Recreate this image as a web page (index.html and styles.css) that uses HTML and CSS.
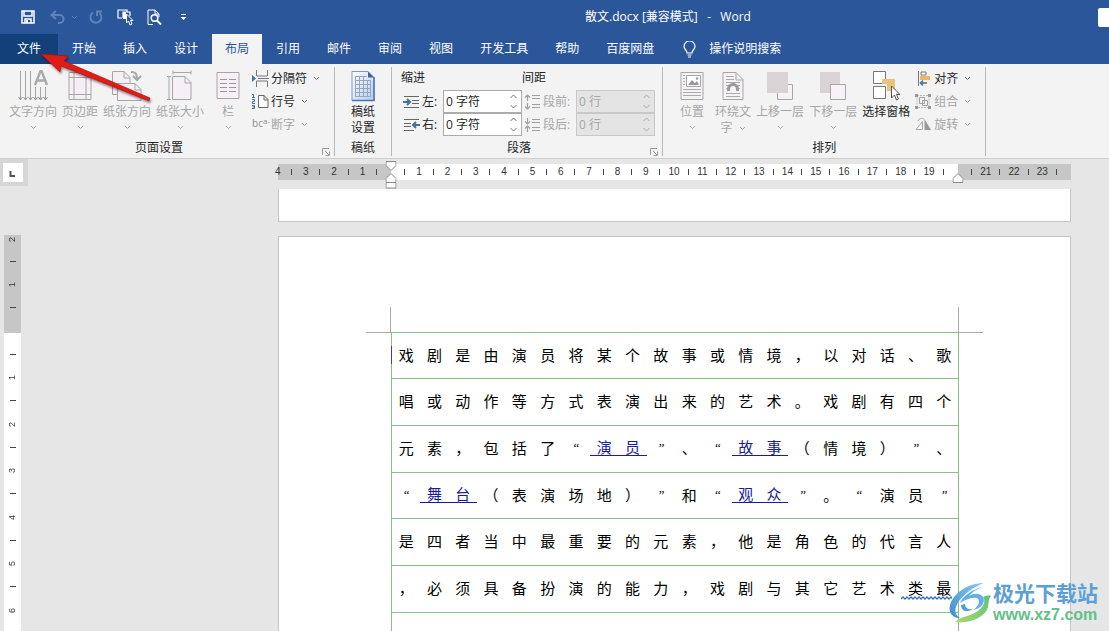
FILE: index.html
```html
<!DOCTYPE html>
<html lang="zh-CN">
<head>
<meta charset="utf-8">
<title>散文.docx - Word</title>
<link rel="stylesheet" href="styles.css">
</head>
<body>
<svg class="defs" aria-hidden="true">
  <symbol id="chev" viewBox="0 0 7 5"><path d="M1 1l2.500 2.500L6 1" fill="none" stroke="currentColor"/></symbol>
  <symbol id="up" viewBox="0 0 7 5"><path d="M.5 4l3-3 3 3" fill="none" stroke="currentColor"/></symbol>
  <symbol id="down" viewBox="0 0 7 5"><path d="M.5 1l3 3 3-3" fill="none" stroke="currentColor"/></symbol>
  <symbol id="launch" viewBox="0 0 8 8"><path d="M.5 7V.5H7M3 3l4 4M7.500 3.500v4h-4" fill="none" stroke="currentColor"/></symbol>
</svg>

<header class="titlebar">
  <div class="tools">
    <button class="tool tool-save" aria-label="保存"><svg width="14" height="14" viewBox="0 0 14 14"><path d="M1 1h12v12H1zM3 1v5h8V1M4 13V9h6v4" fill="none" stroke="#fff" stroke-width="1.500"/><path d="M5 10h2v3H5z" fill="#fff"/></svg></button>
    <button class="tool tool-off tool-undo" aria-label="撤消"><svg width="15" height="14" viewBox="0 0 15 14"><path d="M6 1L1.500 5 6 9M2 5h7.500a4 4 0 0 1 0 8H8" fill="none" stroke="currentColor" stroke-width="2"/></svg><svg width="7" height="5"><use href="#chev"/></svg></button>
    <button class="tool tool-off" aria-label="恢复"><svg width="15" height="14" viewBox="0 0 15 14"><path d="M4 2.500A5.500 5.500 0 1 0 10.500 3M8 6V1.500h5" fill="none" stroke="currentColor" stroke-width="2"/></svg></button>
    <button class="tool" aria-label="选择对象"><svg width="17" height="17" viewBox="0 0 17 17"><path d="M5 9H1V1h9v2M6 9V3h7v4" fill="none" stroke="#fff" stroke-width="1.200"/><path d="M6 3h3v7H6z" fill="#fff"/><path d="M9.500 5v9l2-2 1.500 4 2-1-1.500-3.500H16z" fill="#2b579a" stroke="#fff"/></svg></button>
    <button class="tool" aria-label="打印预览"><svg width="15" height="17" viewBox="0 0 15 17"><path d="M6 15.500H1V1h7l4 4v3M8 1v4h4" fill="none" stroke="#fff"/><circle cx="7.500" cy="9" r="3.300" fill="none" stroke="#fff" stroke-width="1.600"/><path d="M10 11.500l4 4" stroke="#fff" stroke-width="2"/></svg></button>
    <button class="tool" aria-label="自定义快速访问工具栏"><svg width="7" height="7" viewBox="0 0 7 7"><path d="M1 .5h5" stroke="#fff"/><path d="M.5 3h6l-3 3z" fill="#fff"/></svg></button>
  </div>
  <h1 class="title">散文.docx [兼容模式] &nbsp;&nbsp;-&nbsp;&nbsp; Word</h1>
  <span class="title-end"></span>
</header>

<nav class="tabs">
  <button class="tab tab-file">文件</button>
  <button class="tab">开始</button>
  <button class="tab">插入</button>
  <button class="tab">设计</button>
  <button class="tab tab-active">布局</button>
  <button class="tab">引用</button>
  <button class="tab">邮件</button>
  <button class="tab">审阅</button>
  <button class="tab">视图</button>
  <button class="tab">开发工具</button>
  <button class="tab">帮助</button>
  <button class="tab">百度网盘</button>
  <button class="tab tab-tell"><svg width="13" height="17" viewBox="0 0 13 17"><path d="M4 12c0-3-3-3.500-3-6.500a5.300 5.300 0 0 1 11 0c0 3-3 3.500-3 6.500zM4.500 14h4M5 16h3" fill="none" stroke="#fff" stroke-width="1.200"/></svg>操作说明搜索</button>
</nav>

<section class="ribbon">
  <div class="group">
    <div class="group-body group-page">
      <button class="big off"><svg class="big-icon" width="30" height="32" viewBox="0 0 30 32"><path d="M2.500 1v29M7.500 1v29M12.500 1v29M17.500 17v13M22.500 17v13M27.500 17v13" stroke="#a6a6a6"/><path d="M.5 27l2 3 2-3M5.500 27l2 3 2-3M10.500 27l2 3 2-3M15.500 27l2 3 2-3M20.500 27l2 3 2-3M25.500 27l2 3 2-3" fill="none" stroke="#999"/><path d="M17 15l5.500-14h1L29 15M19 10.500h8" fill="none" stroke="#aaa" stroke-width="2.400"/></svg><span>文字方向</span><svg class="chev" width="7" height="5"><use href="#chev"/></svg></button>
      <button class="big off"><svg class="big-icon" width="24" height="32" viewBox="0 0 24 32"><path d="M1 2.500h22v27H1z" fill="#f6eff6" stroke="#a6a6a6"/><path d="M6 2v28M18 2v28M1 7.500h22M1 24.500h22" stroke="#a6a6a6"/></svg><span>页边距</span><svg class="chev" width="7" height="5"><use href="#chev"/></svg></button>
      <button class="big off"><svg class="big-icon" width="30" height="32" viewBox="0 0 30 32"><path d="M5 24.500H.5V1.500H12l6 6V13M12 1.500V8h6" fill="#f6eff6" stroke="#a6a6a6"/><path d="M5.500 13.500H23l6 6v11H5.500zM23 13.500V20h6" fill="#f6eff6" stroke="#a6a6a6"/><path d="M19 2c5 0 6 2 6 7M21 6l4 4 4-4" fill="none" stroke="#a6a6a6" stroke-width="2"/></svg><span>纸张方向</span><svg class="chev" width="7" height="5"><use href="#chev"/></svg></button>
      <button class="big off"><svg class="big-icon" width="26" height="32" viewBox="0 0 26 32"><path d="M5.500 6.500H18l6 6v17H5.500zM18 6.500V13h6" fill="#f6eff6" stroke="#a6a6a6"/><path d="M6 2.500h18M6 .5v4M24 .5v4M2 7v22M0 6.500h4M0 29.500h4" stroke="#a6a6a6"/></svg><span>纸张大小</span><svg class="chev" width="7" height="5"><use href="#chev"/></svg></button>
      <button class="big big-wide off"><svg class="big-icon" width="24" height="32" viewBox="0 0 24 32"><path d="M1 2.500h22v26H1z" fill="#f6eff6" stroke="#a6a6a6"/><path d="M4 9.500h7M13 9.500h7M4 13.500h7M13 13.500h7M4 17.500h7M13 17.500h7M4 21.500h7M13 21.500h7" stroke="#999"/></svg><span>栏</span><svg class="chev" width="7" height="5"><use href="#chev"/></svg></button>
      <div class="stack">
        <button class="small"><svg width="17" height="17" viewBox="0 0 17 17"><path d="M4.500 0v6h11V0M4.500 17v-6h11v6M6 8.500h11" fill="none" stroke="#777"/><path d="M0 5l4 3.500L0 12z" fill="#41719c"/></svg>分隔符<svg class="chev" width="7" height="5"><use href="#chev"/></svg></button>
        <button class="small"><svg width="17" height="17" viewBox="0 0 17 17"><path d="M6.500 2.500H12l4 4v8H6.500zM12 2.500V7h4" fill="#fff" stroke="#666"/><path d="M0 1.500h1.500v3M0 4.500h3M0 6.500h2.500v2H.5v2H3M0 12.500h2.500v3H0M.5 14h2" fill="none" stroke="#41719c"/></svg>行号<svg class="chev" width="7" height="5"><use href="#chev"/></svg></button>
        <button class="small off"><span class="hyphen" aria-hidden="true"><span>bc</span><span class="hyphen-top">a-</span></span>断字<svg class="chev" width="7" height="5"><use href="#chev"/></svg></button>
      </div>
    </div>
    <div class="group-foot group-foot-launch"><h2 class="group-name">页面设置</h2><button class="launcher" aria-label="页面设置选项"><svg width="8" height="8"><use href="#launch"/></svg></button></div>
  </div>

  <div class="group">
    <div class="group-body group-grid">
      <button class="big"><svg class="big-icon" width="24" height="32" viewBox="0 0 24 32"><defs><linearGradient id="paper" x1="0" y1="0" x2="1" y2="1"><stop offset="0" stop-color="#fff"/><stop offset="1" stop-color="#b5cdf0"/></linearGradient></defs><path d="M1 1.500h16l6 6v23H1z" fill="url(#paper)" stroke="#7f9bc6"/><path d="M1 30.500h22V7" fill="none" stroke="#4a73b3" stroke-width="1.500"/><path d="M17 1.500v6h6z" fill="#3b67a8"/><path d="M4.500 6.500v20h15V10M4.500 6.500h11M4.500 10.500h15M4.500 14.500h15M4.500 18.500h15M4.500 22.500h15M4.500 26.500h15M8.500 6v20M12.500 6v20M16.500 10v16" fill="none" stroke="#98a4ba"/></svg><span>稿纸<br>设置</span></button>
    </div>
    <div class="group-foot"><h2 class="group-name">稿纸</h2></div>
  </div>

  <div class="group">
    <div class="group-body group-para">
      <fieldset class="fields">
        <legend class="legend">缩进</legend>
        <div class="field"><svg width="17" height="14" viewBox="0 0 17 14"><path d="M1 1.500h15M9 5.500h7M9 8.500h7M1 12.500h15" stroke="#666"/><path d="M0 7h6M4 4l3 3-3 3" fill="none" stroke="#41719c" stroke-width="2"/></svg><label for="left">左:</label><span class="spin"><input id="left" value="0 字符"><span class="arrows"><button aria-label="增加左缩进"><svg width="7" height="5"><use href="#up"/></svg></button><button aria-label="减少左缩进"><svg width="7" height="5"><use href="#down"/></svg></button></span></span></div>
        <div class="field"><svg width="17" height="14" viewBox="0 0 17 14"><path d="M1 1.500h15M1 5.500h7M1 8.500h7M1 12.500h10" stroke="#666"/><path d="M17 7h-6M13 4l-3 3 3 3" fill="none" stroke="#41719c" stroke-width="2"/></svg><label for="right">右:</label><span class="spin"><input id="right" value="0 字符"><span class="arrows"><button aria-label="增加右缩进"><svg width="7" height="5"><use href="#up"/></svg></button><button aria-label="减少右缩进"><svg width="7" height="5"><use href="#down"/></svg></button></span></span></div>
      </fieldset>
      <fieldset class="fields">
        <legend class="legend">间距</legend>
        <div class="field field-wide off"><svg width="17" height="16" viewBox="0 0 17 16"><path d="M3.500 1v6M1 3.500L3.500 1 6 3.500M3.500 9v6M1 12.500L3.500 15 6 12.500M8 1.500h8M8 4.500h8M8 10.500h8M8 13.500h8" fill="none" stroke="#a0a0a0" stroke-width="1.200"/></svg><label for="before">段前:</label><span class="spin"><input id="before" value="0 行" disabled><span class="arrows"><button disabled aria-label="增加段前"><svg width="7" height="5"><use href="#up"/></svg></button><button disabled aria-label="减少段前"><svg width="7" height="5"><use href="#down"/></svg></button></span></span></div>
        <div class="field field-wide off"><svg width="17" height="16" viewBox="0 0 17 16"><path d="M3.500 1v6M1 4.500L3.500 7 6 4.500M3.500 9v6M1 11.500L3.500 9 6 11.500M8 2.500h8M8 5.500h8M8 10.500h8M8 13.500h8" fill="none" stroke="#a0a0a0" stroke-width="1.200"/></svg><label for="after">段后:</label><span class="spin"><input id="after" value="0 行" disabled><span class="arrows"><button disabled aria-label="增加段后"><svg width="7" height="5"><use href="#up"/></svg></button><button disabled aria-label="减少段后"><svg width="7" height="5"><use href="#down"/></svg></button></span></span></div>
      </fieldset>
    </div>
    <div class="group-foot group-foot-launch"><h2 class="group-name">段落</h2><button class="launcher" aria-label="段落选项"><svg width="8" height="8"><use href="#launch"/></svg></button></div>
  </div>

  <div class="group">
    <div class="group-body group-arrange">
      <button class="big big-mid off"><svg class="big-icon" width="24" height="32" viewBox="0 0 24 32"><path d="M1 2.500h22v27H1z" fill="#f6f2f6" stroke="#a6a6a6"/><path d="M6.500 5.500h14v11h-14z" fill="#fff" stroke="#a6a6a6"/><path d="M8 15l4-5 3 3 2-2 2 4z" fill="#999"/><circle cx="17" cy="8.500" r="1.200" fill="#999"/><path d="M3 5.500h2M3 8.500h2M3 11.500h2M3 14.500h2M3 19.500h18M3 22.500h18M3 25.500h18" stroke="#aaa"/></svg><span>位置</span><svg class="chev" width="7" height="5"><use href="#chev"/></svg></button>
      <button class="big big-mid off"><svg class="big-icon" width="22" height="32" viewBox="0 0 22 32"><path d="M1 2.500h13l7 7v20H1zM14 2.500V10h7" fill="#f6f2f6" stroke="#a6a6a6"/><path d="M4 6.500h8M4 9.500h8M4 12.500h14M4 15.500h3M15 15.500h3M4 18.500h2M16 18.500h2M4 23.500h14M4 26.500h14" stroke="#aaa"/><path d="M6.500 21v-2a4.500 4.500 0 0 1 9 0v2" fill="none" stroke="#999" stroke-width="3"/></svg><span>环绕文<br>字 <svg class="chev-in" width="7" height="5"><use href="#chev"/></svg></span></button>
      <button class="big off"><svg class="big-icon" width="28" height="32" viewBox="0 0 28 32"><path d="M11.500 14.500h15v15h-15z" fill="#f8f2f8" stroke="#a6a6a6"/><path d="M1 2h21v21H1z" fill="#d9d3d6"/></svg><span>上移一层</span><svg class="chev" width="7" height="5"><use href="#chev"/></svg></button>
      <button class="big off"><svg class="big-icon" width="28" height="32" viewBox="0 0 28 32"><path d="M1 2h20v21H1z" fill="#d9d3d6"/><path d="M11.500 14.500h15v15h-15z" fill="#f8f2f8" stroke="#a6a6a6"/></svg><span>下移一层</span><svg class="chev" width="7" height="5"><use href="#chev"/></svg></button>
      <button class="big"><svg class="big-icon" width="28" height="32" viewBox="0 0 28 32"><path d="M1.500 1.500h12v12h-12zM1.500 16.500h12v12h-12z" fill="#fff" stroke="#777"/><path d="M10 9h13v12h-8v-7h-5z" fill="#e9c37b"/><path d="M19.500 16v12l3-3 2 5 2-1-2-4.500h3.500z" fill="#fff" stroke="#555"/></svg><span>选择窗格</span></button>
      <div class="stack">
        <button class="small"><svg width="17" height="17" viewBox="0 0 17 17"><path d="M3.500 1v15" stroke="#777"/><path d="M6 2h5v3H6z" fill="#fff" stroke="#777"/><path d="M5 6h10v4H5z" fill="#e9b765"/><path d="M5 13h7M8 10.500L5.500 13 8 15.500" fill="none" stroke="#41719c" stroke-width="1.600"/></svg>对齐<svg class="chev" width="7" height="5"><use href="#chev"/></svg></button>
        <button class="small off"><svg width="17" height="17" viewBox="0 0 17 17"><path d="M2 2.500h12v12H2z" fill="none" stroke="#b8b8b8" stroke-dasharray="2 1"/><path d="M4.500 4.500h5v6h-5zM7.500 7.500h5v5h-5z" fill="none" stroke="#a0a0a0"/><path d="M0 1h3v3H0zM13 1h3v3h-3zM0 13h3v3H0zM13 13h3v3h-3z" fill="#999"/></svg>组合<svg class="chev" width="7" height="5"><use href="#chev"/></svg></button>
        <button class="small off"><svg width="17" height="17" viewBox="0 0 17 17"><path d="M1 13.500h6.500v-8z" fill="none" stroke="#aaa"/><path d="M9.500 3v11H16z" fill="#999"/><path d="M3 5c1-3 4-3 6-2" fill="none" stroke="#aaa"/></svg>旋转<svg class="chev" width="7" height="5"><use href="#chev"/></svg></button>
      </div>
    </div>
    <div class="group-foot"><h2 class="group-name">排列</h2></div>
  </div>
</section>

<main class="work">
  <aside class="side">
    <button class="tabstop" aria-label="制表符"><svg width="20" height="19" viewBox="0 0 20 19"><path d="M7.500 8v5H12" fill="none" stroke="#555" stroke-width="2"/></svg></button>
    <div class="vruler">
      <span class="vmark vfirst"><b>2</b></span><span class="vmark"><b>1</b></span><span class="vmark vzero"><b></b></span><span class="vmark"><b>1</b></span><span class="vmark"><b>2</b></span><span class="vmark"><b>3</b></span><span class="vmark"><b>4</b></span><span class="vmark"><b>5</b></span><span class="vmark"><b>6</b></span>
    </div>
  </aside>
  <div class="canvas">
    <div class="hruler">
      <span class="mark half"><b>4</b></span><span class="mark"><b>3</b></span><span class="mark"><b>2</b></span><span class="mark"><b>1</b></span><span class="mark"><b></b></span><span class="mark"><b>1</b></span><span class="mark"><b>2</b></span><span class="mark"><b>3</b></span><span class="mark"><b>4</b></span><span class="mark"><b>5</b></span><span class="mark"><b>6</b></span><span class="mark"><b>7</b></span><span class="mark"><b>8</b></span><span class="mark"><b>9</b></span><span class="mark"><b>10</b></span><span class="mark"><b>11</b></span><span class="mark"><b>12</b></span><span class="mark"><b>13</b></span><span class="mark"><b>14</b></span><span class="mark"><b>15</b></span><span class="mark"><b>16</b></span><span class="mark"><b>17</b></span><span class="mark"><b>18</b></span><span class="mark"><b>19</b></span><span class="mark"><b></b></span><span class="mark"><b>21</b></span><span class="mark"><b>22</b></span><span class="mark"><b>23</b></span><span class="half"></span>
      <svg class="indent indent-left" width="11" height="28" viewBox="0 0 11 28"><path d="M.5.500h10v4l-5 5-5-5zM5.500 12.500l5 5v9.500H.5v-9.500zM.5 21.500h10" fill="#fff" stroke="#888"/></svg>
      <svg class="indent indent-right" width="11" height="10" viewBox="0 0 11 10"><path d="M5.500.5l5 5v4H.5v-4z" fill="#fff" stroke="#888"/></svg>
    </div>
    <div class="sheet sheet-tail"></div>
    <article class="sheet sheet-main">
      <div class="manuscript">
        <span class="caret"></span>
        <p class="line"><i>戏</i><i>剧</i><i>是</i><i>由</i><i>演</i><i>员</i><i>将</i><i>某</i><i>个</i><i>故</i><i>事</i><i>或</i><i>情</i><i>境</i><i>，</i><i>以</i><i>对</i><i>话</i><i>、</i><i>歌</i></p>
        <p class="line"><i>唱</i><i>或</i><i>动</i><i>作</i><i>等</i><i>方</i><i>式</i><i>表</i><i>演</i><i>出</i><i>来</i><i>的</i><i>艺</i><i>术</i><i>。</i><i>戏</i><i>剧</i><i>有</i><i>四</i><i>个</i></p>
        <p class="line"><i>元</i><i>素</i><i>，</i><i>包</i><i>括</i><i>了</i><i class="quote">“</i><a class="link" href="#actor"><i>演</i><i>员</i></a><i class="quote">”</i><i>、</i><i class="quote">“</i><a class="link" href="#story"><i>故</i><i>事</i></a><i>（</i><i>情</i><i>境</i><i>）</i><i class="quote">”</i><i>、</i></p>
        <p class="line"><i class="quote">“</i><a class="link" href="#stage"><i>舞</i><i>台</i></a><i>（</i><i>表</i><i>演</i><i>场</i><i>地</i><i>）</i><i class="quote">”</i><i>和</i><i class="quote">“</i><a class="link" href="#audience"><i>观</i><i>众</i></a><i class="quote">”</i><i>。</i><i class="quote">“</i><i>演</i><i>员</i><i class="quote">”</i></p>
        <p class="line"><i>是</i><i>四</i><i>者</i><i>当</i><i>中</i><i>最</i><i>重</i><i>要</i><i>的</i><i>元</i><i>素</i><i>，</i><i>他</i><i>是</i><i>角</i><i>色</i><i>的</i><i>代</i><i>言</i><i>人</i></p>
        <p class="line"><i>，</i><i>必</i><i>须</i><i>具</i><i>备</i><i>扮</i><i>演</i><i>的</i><i>能</i><i>力</i><i>，</i><i>戏</i><i>剧</i><i>与</i><i>其</i><i>它</i><i>艺</i><i>术</i><span class="check"><i>类</i><i>最</i><svg class="wave" width="51" height="4" viewBox="0 0 51 4"><path d="M0 3l2-2 2 2 2-2 2 2 2-2 2 2 2-2 2 2 2-2 2 2 2-2 2 2 2-2 2 2 2-2 2 2 2-2 2 2 2-2 2 2 2-2 2 2 2-2 2 2 2-2 2 2" fill="none" stroke="#3a6fc0" stroke-width="1.300"/></svg></span></p>
        <p class="line"></p>
      </div>
    </article>
  </div>
</main>

<svg class="pointer" width="120" height="60" viewBox="0 0 120 60" aria-hidden="true"><defs><filter id="shade" x="-10%" y="-10%" width="120%" height="130%"><feDropShadow dx="1" dy="2" stdDeviation="1.200" flood-opacity=".45"/></filter></defs><path d="M5 6l27 2-4 5 86 37-1 3-88-35-1 6z" fill="#e01b17" stroke="#a81010" stroke-width=".6" filter="url(#shade)"/></svg>

<div class="watermark">
  <svg width="44" height="44" viewBox="0 0 44 44"><defs><linearGradient id="swb" x1="0" y1="1" x2="1" y2="0"><stop offset="0" stop-color="#3a8ed0"/><stop offset="1" stop-color="#8ccaf4"/></linearGradient><linearGradient id="swg" x1="0" y1="1" x2="1" y2="0"><stop offset="0" stop-color="#a9d96f"/><stop offset="1" stop-color="#5cbf7f"/></linearGradient></defs><path d="M35 2C20 2 5 11 1 24c-2 8 3 13 10 13-6-3-6-10-1-17C16 12 25 6 35 2z" fill="url(#swb)"/><path d="M33 6C22 9 13 16 11 22c6-4 13-6 17-5 4 2 2 8-4 12 8-1 13-8 10-13-3-4-9-4-14-1 3-4 8-7 13-9z" fill="#64aee6"/><path d="M42 15c-3-1-6 0-8 1 4 5-1 14-13 18-6 2-11 3-15 7 14 2 30-4 33-15 1-4 0-8 3-11z" fill="url(#swg)"/><path d="M12 24c0 6 6 8 12 4-5 1-8-1-8-5z" fill="#4a9fe0"/></svg>
  <div class="brand"><strong class="brand-name">极光下载站</strong><span class="brand-url">www.xz7.com</span></div>
</div>
</body>
</html>
```
FILE: styles.css
```css
* { box-sizing: border-box; }

body {
  margin: 0;
  height: 100vh;
  display: flex;
  flex-direction: column;
  position: relative;
  overflow: hidden;
  background: #e6e6e6;
  color: #262626;
  font: 12px/16px "Open Sans", "Noto Sans CJK SC", sans-serif;
}

button, input {
  font: inherit;
  color: inherit;
  border: 0;
  padding: 0;
  margin: 0;
  background: none;
}

svg { display: block; flex: none; }
.defs { position: absolute; width: 0; height: 0; }
h1, h2, p { margin: 0; font-size: inherit; font-weight: 400; }

/* Title bar */
.titlebar {
  flex: none;
  height: 34px;
  display: flex;
  align-items: center;
  background: #2b579a;
  color: #fff;
}
.tools {
  width: 238px;
  padding-left: 21px;
  display: flex;
  align-items: center;
  gap: 13px;
}
.tool { display: flex; align-items: center; }
.tool:last-child { margin-left: 5px; }
.tool-save { margin-right: 2px; }
.tool-off { color: #5f82b8; }
.tool-undo { gap: 6px; margin-right: -2px; }
.title { flex: 1; text-align: center; }
.title-end { width: 11px; height: 19px; background: #fff; border-radius: 2px 0 0 2px; }

/* Tabs */
.tabs {
  flex: none;
  height: 30px;
  display: flex;
  gap: 1px;
  background: #2b579a;
  color: #fff;
}
.tab { padding: 0 13px; white-space: nowrap; }
.tab-file { width: 58px; background: #124078; }
.tab-active { background: #f3f3f3; color: #2b579a; }
.tab-tell { display: flex; align-items: center; gap: 13px; padding-left: 15px; }

/* Ribbon */
.ribbon {
  flex: none;
  display: flex;
  padding: 3px 0 2px;
  background: #f3f3f3;
  border-bottom: 1px solid #cfcfcf;
}
.group { border-right: 1px solid #b8b8b8; }
.group-body { height: 72px; display: flex; }
.group-foot {
  position: relative;
  display: flex;
  justify-content: center;
  height: 17px;
  line-height: 18px;
}
.group-foot-launch { padding-right: 16px; }
.launcher { position: absolute; right: 4px; bottom: 0; color: #999; }
.group-page { padding: 0 14px 0 9px; gap: 5px; }
.group-grid { padding: 0 16px; }
.group-para { padding: 0 7px 0 9px; }
.group-arrange { padding: 0 14px 0 11px; gap: 5px; }

.big {
  display: flex;
  flex-direction: column;
  align-items: center;
  padding-top: 3px;
  white-space: nowrap;
}
.big-icon { margin-bottom: 2px; }
.big-mid { min-width: 36px; }
.big-wide { min-width: 38px; }
.big .chev { margin-top: 5px; }
.chev-in { display: inline-block; vertical-align: middle; margin-left: 3px; }
.chev, .chev-in { color: #666; }
.off { color: #a6a6a6; }
.off .chev, .off .chev-in { color: #aaa; }

.stack { display: flex; flex-direction: column; }
.small { display: flex; align-items: center; height: 23px; gap: 2px; white-space: nowrap; }
.small .chev { margin-left: 4px; }
.hyphen { display: flex; width: 17px; font-size: 10px; line-height: 12px; color: #8c8c8c; }
.hyphen-top { font-size: 8px; line-height: 8px; padding-bottom: 8px; }

.fields { border: 0; margin: 0; padding: 0; min-width: 0; }
.legend { padding: 0; height: 23px; line-height: 21px; }
.field { display: flex; align-items: center; height: 23px; padding-left: 2px; gap: 2px; }
.field label { width: 19px; }
.field-wide label { width: 31px; }
.spin {
  display: flex;
  width: 79px;
  height: 23px;
  border: 1px solid #ababab;
  background: #fff;
}
.off .spin { background: #e4e4e4; border-color: #c8c8c8; }
.spin input { flex: 1; min-width: 0; padding-left: 2px; }
.spin input:disabled { color: #a6a6a6; }
.arrows { width: 15px; display: flex; flex-direction: column; color: #777; }
.arrows button { flex: 1; display: grid; place-items: center; }
.off .arrows { color: #aaa; }

/* Workspace */
.work { flex: 1; min-height: 0; display: flex; overflow: hidden; }
.side { width: 28px; flex: none; }
.tabstop { display: block; padding: 4px 5px 4px 3px; background: #d6d6d6; }
.tabstop svg { background: #fff; }
.vruler {
  width: 17px;
  margin: 49px 0 0 4px;
  display: flex;
  flex-direction: column;
  background: linear-gradient(#c6c6c6 98px, #fff 98px);
  font: 9px/9px "Liberation Sans", Arial, sans-serif;
  color: #333;
}
.vmark { height: 46px; display: flex; flex-direction: column; align-items: center; }
.vmark:nth-child(odd) { height: 47px; }
.vmark.vfirst { height: 27px; padding-top: 2px; }
.vmark b {
  flex: 1;
  font-weight: 400;
  text-align: center;
  writing-mode: vertical-rl;
  transform: rotate(180deg);
}
.vfirst b { text-align: right; }
.vmark::after { content: ""; width: 6px; height: 1px; background: #444; }

.canvas { flex: 1; min-width: 0; padding: 5px 38px 0 250px; }
.hruler {
  position: relative;
  height: 16px;
  display: flex;
  margin-bottom: 9px;
  background: linear-gradient(90deg, #c6c6c6 14.290%, #fff 14.290%, #fff 85.710%, #c6c6c6 85.710%);
  font: 10px/18px "Liberation Sans", Arial, sans-serif;
  color: #333;
}
.mark { flex: 2 1 0; min-width: 0; display: flex; align-items: center; }
.half { flex: 1 1 0; }
.mark b { flex: 1; font-weight: 400; text-align: center; }
.mark.half b { text-align: left; margin-left: -3px; }
.mark::after { content: ""; width: 1px; height: 6px; background: #444; }
.indent { position: absolute; transform: translateX(-50%); }
.indent-left { left: 14.290%; top: -3px; }
.indent-right { left: 85.710%; bottom: -3px; }

.sheet { background: #fff; border: 1px solid #c6c6c6; }
.sheet-tail { height: 33px; border-top: 0; margin-bottom: 14px; }
.sheet-main { padding: 95px 111px 0 112px; height: 600px; }

.manuscript {
  position: relative;
  border: 1px solid #85c085;
  border-bottom: 0;
  color: #000;
  font: 15px/17px "Noto Sans CJK SC", sans-serif;
}
.manuscript::before, .manuscript::after {
  content: "";
  position: absolute;
  top: -26px;
  width: 24px;
  height: 25px;
  border-bottom: 1px solid #aaa;
}
.manuscript::before { right: 100%; margin-right: 1px; border-right: 1px solid #aaa; }
.manuscript::after { left: 100%; border-left: 1px solid #aaa; }
.line {
  display: grid;
  grid-template-columns: repeat(20, 1fr);
  align-items: center;
  height: 47px;
  padding-bottom: 3px;
  border-bottom: 1px solid #85c085;
}
.line:nth-of-type(3n+1) { height: 46px; }
.line i { font-style: normal; text-align: center; }
.line .quote { font: italic 13px/17px "Liberation Serif", serif; }
.link, .check { grid-column: span 2; display: grid; grid-template-columns: subgrid; }
.link { color: #1a1a9c; text-decoration: none; border-bottom: 1px solid #1a1a9c; line-height: 16px; }
.check { position: relative; }
.wave { position: absolute; left: 0; top: 100%; }
.caret { position: absolute; left: -1px; top: 13px; width: 1px; height: 18px; background: #5b3a6b; }

/* Overlays */
.pointer { position: absolute; left: 36px; top: 48px; }
.watermark { position: absolute; right: 11px; bottom: 6px; display: flex; align-items: center; }
.brand { display: flex; flex-direction: column; }
.brand-name { font: 700 21px/25px "Noto Sans CJK SC", sans-serif; color: #5b9fd6; }
.brand-url { font: 700 16px/20px "Liberation Sans", Arial, sans-serif; color: #62c08a; }
```
